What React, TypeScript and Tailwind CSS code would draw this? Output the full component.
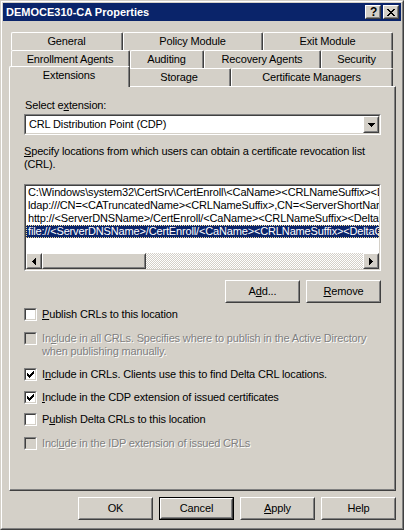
import React from "react"

type Kids = { className?: string; children?: React.ReactNode }

// classic 3d frames
function Raised({ className = "", children }: Kids) {
  return (
    <div className={`bg-[#d4d0c8] border border-t-white border-l-white border-r-[#404040] border-b-[#404040] ${className}`}>
      <div className="w-full h-full border border-t-[#d4d0c8] border-l-[#d4d0c8] border-r-[#808080] border-b-[#808080] flex items-center justify-center">
        {children}
      </div>
    </div>
  )
}

function Sunken({ className = "", children }: Kids) {
  return (
    <div className={`border border-t-[#808080] border-l-[#808080] border-r-white border-b-white ${className}`}>
      <div className="w-full h-full border border-t-[#404040] border-l-[#404040] border-r-[#d4d0c8] border-b-[#d4d0c8]">
        {children}
      </div>
    </div>
  )
}

function Tab({ className = "", label }: { className?: string; label: string }) {
  return (
    <div className={`h-[18px] shrink-0 border-l border-t border-r border-l-white border-t-white border-r-[#404040] rounded-tl-[2px] rounded-tr-[2px] ${className}`}>
      <div className="h-full border-r border-r-[#808080] flex items-center justify-center pb-px">{label}</div>
    </div>
  )
}

function Check({ checked, disabled, children }: { checked?: boolean; disabled?: boolean; children: React.ReactNode }) {
  return (
    <div className="flex items-start">
      <Sunken className="w-[13px] h-[13px] shrink-0">
        <div className={`w-full h-full flex items-center justify-center ${disabled ? "bg-[#d4d0c8]" : "bg-white"}`}>
          {checked && (
            <svg width="7" height="7" viewBox="0 0 7 7" shapeRendering="crispEdges">
              <path d="M6 0h1v1h-1z M5 1h2v1h-2z M0 2h1v1h-1z M4 2h3v1h-3z M0 3h2v1h-2z M3 3h3v1h-3z M0 4h5v1h-5z M1 5h3v1h-3z M2 6h1v1h-1z" fill="#000" />
            </svg>
          )}
        </div>
      </Sunken>
      <div className={`ml-[5px] ${disabled ? "text-[#808080] [text-shadow:1px_1px_0_#fff]" : ""}`}>{children}</div>
    </div>
  )
}

const Btn = ({ children }: { children: React.ReactNode }) => (
  <Raised className="w-[75px] h-[23px]">{children}</Raised>
)

const ArrowL = () => (
  <svg width="4" height="7" viewBox="0 0 4 7" shapeRendering="crispEdges">
    <path d="M3 0h1v7h-1z M2 1h1v5h-1z M1 2h1v3h-1z M0 3h1v1h-1z" fill="#000" />
  </svg>
)
const ArrowR = () => (
  <svg width="4" height="7" viewBox="0 0 4 7" shapeRendering="crispEdges">
    <path d="M0 0h1v7h-1z M1 1h1v5h-1z M2 2h1v3h-1z M3 3h1v1h-1z" fill="#000" />
  </svg>
)

const urls = [
  "C:\\Windows\\system32\\CertSrv\\CertEnroll\\<CaName><CRLNameSuffix><DeltaCRLAllowed>.crl",
  "ldap:///CN=<CATruncatedName><CRLNameSuffix>,CN=<ServerShortName>,CN=CDP,CN=Public Key Services",
  "http://<ServerDNSName>/CertEnroll/<CaName><CRLNameSuffix><DeltaCRLAllowed>.crl",
  "file://<ServerDNSName>/CertEnroll/<CaName><CRLNameSuffix><DeltaCRLAllowed>.crl",
]

export default function App() {
  return (
    <div className="w-[404px] h-[530px] font-['Liberation_Sans',Arial,sans-serif] text-[11px] leading-[13px] tracking-[-0.15px] text-black select-none">
      <div className="w-full h-full border border-t-[#d4d0c8] border-l-[#d4d0c8] border-r-[#404040] border-b-[#404040]">
        <div className="w-full h-full border border-t-white border-l-white border-r-[#808080] border-b-[#808080] bg-[#d4d0c8] p-px">
          {/* caption */}
          <div className="h-[18px] bg-[#0a246a] flex items-center justify-between pl-[3px] pr-[2px]">
            <span className="text-white font-bold text-[11px] tracking-normal">DEMOCE310-CA Properties</span>
            <div className="flex gap-[2px]">
              <Raised className="w-[16px] h-[14px]">
                <span className="font-bold text-[12px] leading-[12px] pl-px">?</span>
              </Raised>
              <Raised className="w-[16px] h-[14px]">
                <svg width="8" height="7" viewBox="0 0 8 7" shapeRendering="crispEdges">
                  <path d="M0 0h2v1h-2z M6 0h2v1h-2z M1 1h2v1h-2z M5 1h2v1h-2z M2 2h4v1h-4z M3 3h2v1h-2z M2 4h4v1h-4z M1 5h2v1h-2z M5 5h2v1h-2z M0 6h2v1h-2z M6 6h2v1h-2z" fill="#000" />
                </svg>
              </Raised>
            </div>
          </div>

          {/* tabs */}
          <div className="mt-[11px] ml-[8px] w-[382px]">
            <div className="flex">
              <Tab className="w-[112px]" label="General" />
              <Tab className="w-[140px]" label="Policy Module" />
              <Tab className="w-[130px]" label="Exit Module" />
            </div>
            <div className="flex">
              <Tab className="w-[119px]" label="Enrollment Agents" />
              <Tab className="w-[74px]" label="Auditing" />
              <Tab className="w-[117px]" label="Recovery Agents" />
              <Tab className="w-[72px]" label="Security" />
            </div>
            <div className="flex h-[18px] items-start">
              <div className="relative z-10 w-[121px] h-[21px] -ml-[2px] -mr-[2px] -mt-[2px] shrink-0 bg-[#d4d0c8] border-l border-t border-r border-l-white border-t-white border-r-[#404040] rounded-tl-[2px] rounded-tr-[2px]">
                <div className="h-full border-r border-r-[#808080] flex justify-center pt-[2px]">Extensions</div>
              </div>
              <Tab className="w-[103px]" label="Storage" />
              <Tab className="w-[162px]" label="Certificate Managers" />
            </div>
          </div>

          {/* page */}
          <div className="ml-[6px] w-[387px] h-[405px] border border-t-white border-l-white border-r-[#404040] border-b-[#404040]">
            <div className="w-full h-full border-r border-b border-r-[#808080] border-b-[#808080] pl-[14px] pt-[12px]">
              <div className="ml-px">
                Select e<u>x</u>tension:
              </div>
              <Sunken className="mt-[2px] w-[357px] h-[21px]">
                <div className="w-full h-full bg-white flex items-center justify-between">
                  <span className="pl-[3px]">CRL Distribution Point (CDP)</span>
                  <Raised className="w-[16px] h-[17px]">
                    <svg width="7" height="4" viewBox="0 0 7 4" shapeRendering="crispEdges">
                      <path d="M0 0h7v1h-7z M1 1h5v1h-5z M2 2h3v1h-3z M3 3h1v1h-1z" fill="#000" />
                    </svg>
                  </Raised>
                </div>
              </Sunken>
              <div className="mt-[10px] whitespace-nowrap">
                <u>S</u>pecify locations from which users can obtain a certificate revocation list
                <br />
                (CRL).
              </div>
              <Sunken className="mt-[13px] w-[357px] h-[87px]">
                <div className="w-full h-full bg-white flex flex-col">
                  <div className="flex-1 overflow-hidden whitespace-nowrap">
                    {urls.map((u, i) =>
                      i === 3 ? (
                        <div key={i} className="h-[13px] bg-[#0a246a] text-white border border-dotted border-[#f5db95] pl-px leading-[11px]">
                          {u}
                        </div>
                      ) : (
                        <div key={i} className="h-[13px] pl-[2px]">
                          {u}
                        </div>
                      )
                    )}
                  </div>
                  <div className="h-[16px] flex shrink-0">
                    <Raised className="w-[16px] h-[16px] shrink-0">
                      <ArrowL />
                    </Raised>
                    <Raised className="w-[104px] h-[16px] shrink-0" />
                    <div className="flex-1 [background-image:repeating-conic-gradient(#ffffff_0%_25%,#d4d0c8_0%_50%)] [background-size:2px_2px]" />
                    <Raised className="w-[16px] h-[16px] shrink-0">
                      <ArrowR />
                    </Raised>
                  </div>
                </div>
              </Sunken>
              <div className="mt-[9px] w-[357px] flex justify-end gap-[6px]">
                <Btn>
                  A<u>d</u>d...
                </Btn>
                <Btn>
                  <u>R</u>emove
                </Btn>
              </div>

              <div className="mt-[5px]">
                <Check>
                  <u>P</u>ublish CRLs to this location
                </Check>
              </div>
              <div className="mt-[11px]">
                <Check disabled>
                  In<u>c</u>lude in all CRLs. Specifies where to publish in the Active Directory
                  <br />
                  when publishing manually.
                </Check>
              </div>
              <div className="mt-[10px]">
                <Check checked>
                  I<u>n</u>clude in CRLs. Clients use this to find Delta CRL locations.
                </Check>
              </div>
              <div className="mt-[10px]">
                <Check checked>
                  <u>I</u>nclude in the CDP extension of issued certificates
                </Check>
              </div>
              <div className="mt-[9px]">
                <Check>
                  P<u>u</u>blish Delta CRLs to this location
                </Check>
              </div>
              <div className="mt-[11px]">
                <Check disabled>
                  Incl<u>u</u>de in the IDP extension of issued CRLs
                </Check>
              </div>
            </div>
          </div>

          {/* dialog buttons */}
          <div className="mt-[6px] ml-[6px] w-[387px] flex justify-end gap-[6px]">
            <Btn>OK</Btn>
            <div className="w-[75px] h-[23px] border border-black">
              <Raised className="w-full h-full">Cancel</Raised>
            </div>
            <Btn>
              <u>A</u>pply
            </Btn>
            <Btn>Help</Btn>
          </div>
        </div>
      </div>
    </div>
  )
}
